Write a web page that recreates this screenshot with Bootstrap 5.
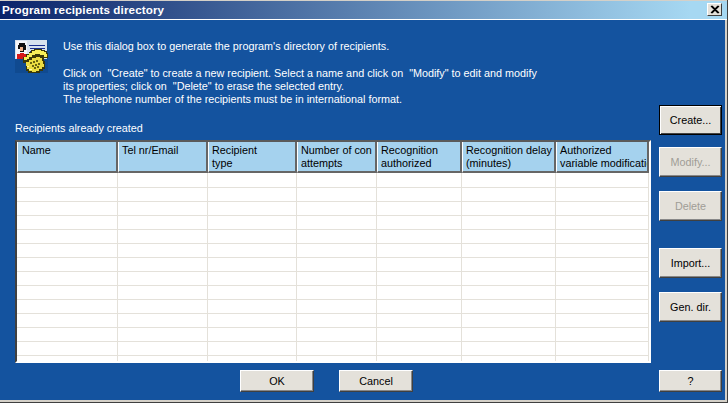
<!DOCTYPE html>
<html lang="en">
<head>
<meta charset="utf-8">
<title>Program recipients directory</title>
<link href="https://cdn.jsdelivr.net/npm/bootstrap@5.3.0/dist/css/bootstrap.min.css" rel="stylesheet">
<style>
html,body{margin:0;background:#fff;overflow:hidden}
body{font-family:"Liberation Sans",Arial,sans-serif;font-size:10.8px;line-height:13px}
.dlg{width:728px;height:403px;background:#14539f;color:#fff;border-right:1px solid #404040;border-bottom:1px solid #404040;box-shadow:inset -2px -2px 0 #d4d0c8}
.ttl{height:20px;padding:0 5px 1px 2px;background:linear-gradient(90deg,#0a246a,#a6d8f2 95%);border-top:1px solid #d4d0c8;border-bottom:1px solid #fff;font-weight:700;font-size:11.6px;letter-spacing:.13px}
.xbtn{width:15px;height:13px;background:#e4e1da;color:#000;border:1px solid;border-color:#fff #404040 #404040 #fff}
.xbtn svg{display:block}
.lft{width:636px;margin-left:15px;padding-top:20px}
.ico{width:33px;height:33px;margin-right:15px;flex:none}
.intro p{margin:0 0 14px}
.cap{margin:16px 0 5px;height:13px}
.gridbox{height:223px;width:636px;background:#fff;border:solid;border-width:2px;border-color:#5a5a5a #fff #fff #404040;overflow:hidden}
.grid{table-layout:fixed;width:632px;border-collapse:separate;border-spacing:0;color:#000}
.grid th{height:31px;padding:2px 0 0 3px;vertical-align:top;font-weight:400;background:#a5d2ee;border-right:2px solid #666;border-bottom:2px solid #666;border-left:1px solid #fff;white-space:nowrap;overflow:hidden}
.grid th:first-child{padding-left:4px}
.grid td{height:14px;padding:0;border-right:1px solid #e4e1da;border-bottom:1px solid #e4e1da;background:#fff}
.grid tr.rfirst td{height:15px}
.grid tr.rlast td{height:5px;border-bottom:0}
.foot{margin-top:7px;gap:25px;padding-left:225px}
.wbtn{width:63px;height:30px;padding:0;border-radius:0;background:#e4e1da;color:#000;font-size:10.8px;line-height:13px;border:1px solid;border-color:#fff #404040 #404040 #fff;box-shadow:inset -1px -1px 0 #888}
.wbtn:hover{background:#e4e1da;color:#000}
.wbtn.dflt{border-color:#000;box-shadow:inset 1px 1px 0 #fff,inset -1px -1px 0 #444}
.wbtn:disabled{background:#e4e1da;color:#a09d96;opacity:1;border-color:#fff #404040 #404040 #fff}
.wbtn.wide{width:74px;height:22px}
.wbtn.lowb{height:22px}
.rgt{width:63px;margin-left:8px;padding-top:85px}
.gap1{margin-top:12px}.gap2{margin-top:14px}.gap3{margin-top:27px}.gap4{margin-top:14px}.gap5{margin-top:48px}
</style>
</head>
<body>
<div class="dlg d-flex flex-column">
  <div class="ttl d-flex align-items-center justify-content-between">
    <span>Program recipients directory</span>
    <span class="xbtn"><svg width="13" height="11" viewBox="0 0 13 11"><path d="M3 2l7 7M4 2l7 7M10 2L3 9M11 2L4 9" stroke="#000" stroke-width="1.1" fill="none"/></svg></span>
  </div>
  <div class="d-flex flex-grow-1">
    <div class="lft">
      <div class="d-flex intro">
        <svg class="ico" viewBox="0 0 33 33" shape-rendering="crispEdges">
          <rect width="33" height="33" fill="#104a90"/>
          <rect x="0" y="0" width="32" height="19" fill="#d8e2ee"/>
          <rect x="1" y="1" width="11" height="17" fill="#f4f6fa"/>
          <path d="M14 5h16v1H14zM15 8h15v1H15zM15 11h15v1H15z" fill="#1a2f8f"/>
          <path d="M4 3h6v2h1v5H9v2H5V9H3V5h1z" fill="#101010"/>
          <path d="M5 7h3v4H5z" fill="#f0b48c"/>
          <path d="M2 19v-5h3v-1h4v1h3v5z" fill="#d81818"/>
          <path d="M8 17h3v-3h3v-2h2v-2h3v-1h8v1h3v1h2v2h1v5h-4v3l1 1v7h-2v2h-3v2h-4v1h-5v-1h-3v-2h-2v-6h2v-3h-2v1H8z" fill="#3a3808"/>
          <path d="M9 17h3v-2h2v-2h3v-2h3v-1h6v1h3v1h2v2h1v3h-3v-2h-4v-1h-5v1h-3v2h-3v2h-2v1H9z" fill="#f6ee58"/>
          <path d="M11 22h3v-2h3v-2h4v-1h4v1h2v3h1v3h1v3h-2v2h-3v2h-3v1h-4v-1h-3v-2h-2v-3h-1z" fill="#ecdc42"/>
          <path d="M15 22h2v2h-2zM18 21h2v2h-2zM21 20h2v2h-2zM17 25h2v2h-2zM20 24h2v2h-2zM23 23h2v2h-2zM19 27h2v2h-2zM22 26h2v2h-2z" fill="#6a6412"/>
          <path d="M12 26h2v1h-2zM14 29h3v1h-3z" fill="#fffaa8"/>
        </svg>
        <div>
          <p>Use this dialog box to generate the program's directory of recipients.</p>
          <p class="mb-0">Click on &nbsp;"Create" to create a new recipient. Select a name and click on &nbsp;"Modify" to edit and modify<br>its properties; click on &nbsp;"Delete" to erase the selected entry.<br>The telephone number of the recipients must be in international format.</p>
        </div>
      </div>
      <div class="cap">Recipients already created</div>
      <div class="gridbox">
        <table class="grid">
          <colgroup><col style="width:101px"><col style="width:90px"><col style="width:89px"><col style="width:80px"><col style="width:85px"><col style="width:94px"><col style="width:93px"></colgroup>
          <thead><tr><th>Name</th><th>Tel nr/Email</th><th>Recipient<br>type</th><th>Number of con<br>attempts</th><th>Recognition<br>authorized</th><th>Recognition delay<br>(minutes)</th><th>Authorized<br>variable modification</th></tr></thead>
          <tbody>
            <tr class="rfirst"><td></td><td></td><td></td><td></td><td></td><td></td><td></td></tr>
            <tr><td></td><td></td><td></td><td></td><td></td><td></td><td></td></tr>
            <tr><td></td><td></td><td></td><td></td><td></td><td></td><td></td></tr>
            <tr><td></td><td></td><td></td><td></td><td></td><td></td><td></td></tr>
            <tr><td></td><td></td><td></td><td></td><td></td><td></td><td></td></tr>
            <tr><td></td><td></td><td></td><td></td><td></td><td></td><td></td></tr>
            <tr><td></td><td></td><td></td><td></td><td></td><td></td><td></td></tr>
            <tr><td></td><td></td><td></td><td></td><td></td><td></td><td></td></tr>
            <tr><td></td><td></td><td></td><td></td><td></td><td></td><td></td></tr>
            <tr><td></td><td></td><td></td><td></td><td></td><td></td><td></td></tr>
            <tr><td></td><td></td><td></td><td></td><td></td><td></td><td></td></tr>
            <tr><td></td><td></td><td></td><td></td><td></td><td></td><td></td></tr>
            <tr><td></td><td></td><td></td><td></td><td></td><td></td><td></td></tr>
            <tr class="rlast"><td></td><td></td><td></td><td></td><td></td><td></td><td></td></tr>
          </tbody>
        </table>
      </div>
      <div class="foot d-flex">
        <button class="btn wbtn wide" type="button">OK</button>
        <button class="btn wbtn wide" type="button">Cancel</button>
      </div>
    </div>
    <div class="rgt d-flex flex-column">
      <button class="btn wbtn dflt" type="button">Create...</button>
      <button class="btn wbtn gap1" type="button" disabled>Modify...</button>
      <button class="btn wbtn gap2" type="button" disabled>Delete</button>
      <button class="btn wbtn gap3" type="button">Import...</button>
      <button class="btn wbtn gap4" type="button">Gen. dir.</button>
      <button class="btn wbtn lowb gap5" type="button">?</button>
    </div>
  </div>
</div>
<script src="https://cdn.jsdelivr.net/npm/bootstrap@5.3.0/dist/js/bootstrap.bundle.min.js"></script>
</body>
</html>
